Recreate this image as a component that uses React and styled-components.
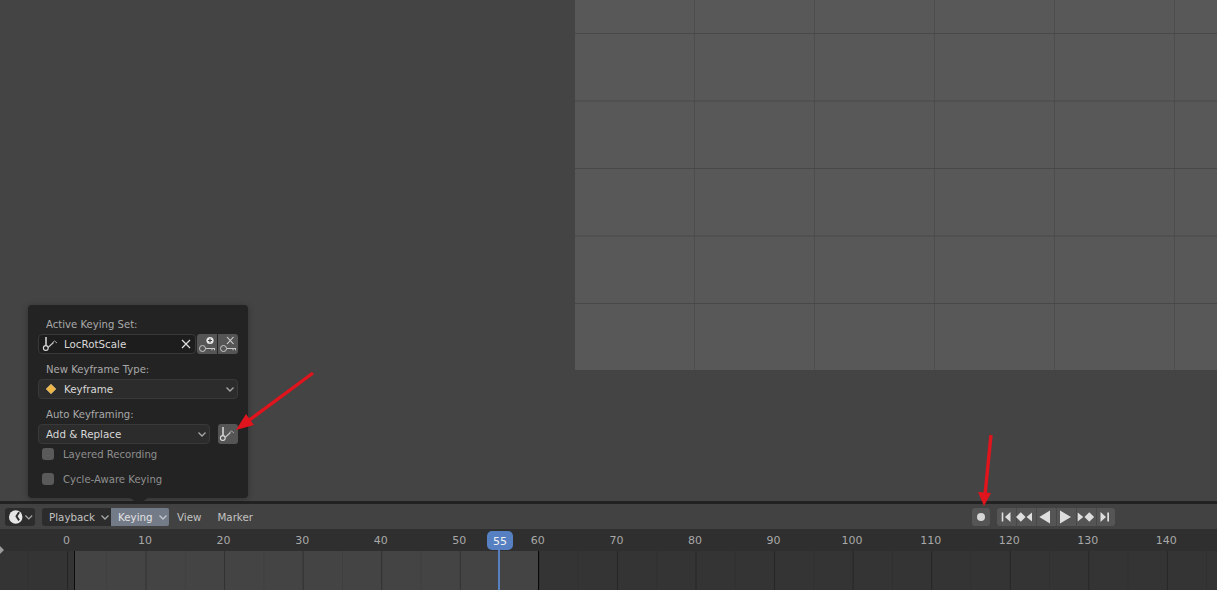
import React from "react";
import styled, { createGlobalStyle } from "styled-components";

const GlobalStyle = createGlobalStyle`
  html, body { margin: 0; padding: 0; background: #444444; overflow: hidden; }
  body { font-family: "DejaVu Sans", sans-serif; font-size: 10.3px; }
`;

const Screen = styled.div`
  position: relative;
  width: 1217px;
  height: 590px;
  display: flex;
  flex-direction: column;
  overflow: hidden;
`;

const Viewport = styled.div`
  height: 501px;
  background: #444444;
  display: flex;
  justify-content: flex-end;
  align-items: flex-start;
`;

// the lighter plane, lines every 120 x 67.5
const Plane = styled.div`
  width: 642px;
  height: 370px;
  background-color: #585858;
  background-image:
    linear-gradient(180deg, #484848 0 1px, transparent 1px),
    linear-gradient(90deg, #4d4d4d 0 1px, transparent 1px);
  background-size: 100% 67.5px, 120px 100%;
  background-position: 0 33px, 119px 0;
`;

const Divider = styled.div`
  height: 3px;
  background: #222222;
`;

const Header = styled.div`
  height: 25px;
  background: #424242;
  display: flex;
  align-items: center;
  padding-left: 5px;
  color: #c4c4c4;
`;

const DropButton = styled.div`
  height: 18px;
  box-sizing: border-box;
  width: ${(p) => p.$w}px;
  margin-left: ${(p) => p.$ml || 0}px;
  padding-left: ${(p) => p.$pl || 7}px;
  display: flex;
  align-items: center;
  justify-content: space-between;
  background: ${(p) => (p.$active ? "#737b88" : "#2c2c2c")};
  color: ${(p) => (p.$active ? "#e2e2e2" : "#c2c2c2")};
  border-radius: ${(p) => p.$radius || "3px"};
`;

const MenuText = styled.span`
  margin-left: ${(p) => p.$ml}px;
  color: #c2c2c2;
`;

const Transport = styled.div`
  margin-left: auto;
  margin-right: 102px;
  display: flex;
  align-items: center;
`;

const RoundButton = styled.div`
  width: 18px;
  height: 18px;
  background: #555555;
  border-radius: 3px;
  display: flex;
  align-items: center;
  justify-content: center;
`;

const ButtonGroup = styled.div`
  margin-left: 7px;
  display: flex;
  height: 18px;
  background: #555555;
  border-radius: 3px;
  overflow: hidden;
`;

const GroupButton = styled.div`
  width: ${(p) => p.$w}px;
  height: 18px;
  box-shadow: ${(p) => (p.$first ? "none" : "inset 1px 0 0 #484848")};
`;

const Ruler = styled.div`
  height: 22px;
  box-sizing: border-box;
  padding: 1px 0 0 27.2px;
  background: #2f2f2f;
  display: flex;
  align-items: center;
  color: #a8a8a8;
`;

const Tick = styled.div`
  flex: none;
  width: 78.57px;
  text-align: center;
  font-size: 11px;
`;

const Track = styled.div`
  flex: 1;
  background-image:
    linear-gradient(90deg, rgba(0, 0, 0, 0.22) 0 1px, transparent 1px),
    linear-gradient(90deg, rgba(0, 0, 0, 0.08) 0 1px, transparent 1px),
    linear-gradient(90deg, #343434 0 74px, #0c0c0c 74px 75px, #444444 75px 538px, #0c0c0c 538px 539px, #343434 539px);
  background-size: 78.57px 100%, 39.285px 100%, 100% 100%;
  background-position: 67px 0, 27.7px 0, 0 0;
  background-repeat: repeat-x, repeat-x, no-repeat;
`;

const FrameBadge = styled.div`
  position: absolute;
  left: 487px;
  top: 531px;
  width: 26px;
  height: 19px;
  box-sizing: border-box;
  padding-top: 1px;
  border-radius: 5px;
  background: #5680c2;
  color: #f0f0f0;
  font-size: 11px;
  display: flex;
  align-items: center;
  justify-content: center;
`;

const FrameLine = styled.div`
  position: absolute;
  left: 498px;
  top: 550px;
  width: 2px;
  height: 40px;
  background: #5680c2;
`;

const Popup = styled.div`
  position: absolute;
  left: 28px;
  top: 305px;
  width: 220px;
  height: 193px;
  box-sizing: border-box;
  padding: 11px 10px 0 10px;
  background: #232323;
  border-radius: 4px;
  box-shadow: 0 1px 6px rgba(0, 0, 0, 0.3);
  color: #a9a9a9;
  display: flex;
  flex-direction: column;
  &::after {
    content: "";
    position: absolute;
    left: 102px;
    bottom: -6px;
    border-left: 9px solid transparent;
    border-right: 9px solid transparent;
    border-top: 6px solid #232323;
  }
`;

const Label = styled.div`
  height: 18px;
  line-height: 17px;
  padding-left: 8px;
  font-size: 10.1px;
  color: #a9a9a9;
`;

const Row = styled.div`
  display: flex;
  height: 20px;
  margin-bottom: 7px;
`;

const Field = styled.div`
  flex: ${(p) => (p.$w ? "none" : 1)};
  width: ${(p) => (p.$w ? `${p.$w}px` : "auto")};
  box-sizing: border-box;
  background: ${(p) => (p.$select ? "#2c2c2c" : "#1d1d1d")};
  border: 1px solid #393939;
  border-radius: 4px;
  display: flex;
  align-items: center;
  color: #d8d8d8;
  padding-left: ${(p) => p.$pl || 7}px;
`;

const FieldIcon = styled.div`
  width: 18px;
  flex: none;
  display: flex;
  align-items: center;
  justify-content: center;
  margin-right: 4px;
`;

const FieldEnd = styled.div`
  margin-left: auto;
  margin-right: ${(p) => p.$mr || 3}px;
  display: flex;
  align-items: center;
`;

const IconButton = styled.div`
  width: 20px;
  height: 20px;
  flex: none;
  background: #555555;
  margin-left: ${(p) => p.$ml || 0}px;
  border-radius: ${(p) => p.$radius || "3px"};
  display: flex;
  align-items: center;
  justify-content: center;
`;

const CheckList = styled.div`
  margin-top: -10px;
`;

const CheckRow = styled.div`
  height: 25px;
  display: flex;
  align-items: center;
  padding-left: 4px;
  font-size: 10.1px;
  color: #8f8f8f;
`;

const CheckText = styled.span`
  padding-top: 1px;
`;

const CheckBox = styled.div`
  width: 12px;
  height: 12px;
  border-radius: 3px;
  background: #5a5a5a;
  margin-right: 9px;
`;

const ArrowLayer = styled.svg`
  position: absolute;
  left: 0;
  top: 0;
  pointer-events: none;
`;

const EdgeMark = styled.svg`
  position: absolute;
  left: 0;
  top: 546px;
`;

const Chevron = ({ color = "#a8a8a8" }) => (
  <svg width="12" height="12" viewBox="0 0 12 12">
    <path d="M2.5 4.5 6 8l3.5-3.5" fill="none" stroke={color} strokeWidth="1.3" />
  </svg>
);

const KeyingIcon = () => (
  <svg width="18" height="18" viewBox="0 0 18 18" fill="none" stroke="#dedede" strokeWidth="1.1">
    <path d="M4 2v8" strokeWidth="1.5" />
    <circle cx="3.8" cy="13" r="2.4" />
    <path d="M6 12.5 11.5 7.5" stroke="#c4c4c4" strokeWidth="1.2" />
    <path d="M10.5 7.5 12.5 6l2.5 2" strokeWidth="1" stroke="#a8a8a8" />
  </svg>
);

const KeyAddIcon = ({ mark }) => (
  <svg width="20" height="20" viewBox="0 0 20 20" fill="none" stroke="#c8c8c8" strokeWidth="1">
    <circle cx="5.5" cy="14.5" r="3" />
    <path d="M8.5 14.5H18M15 14.5v1.8M17.5 14.5v1.8" />
    {mark === "add" ? (
      <>
        <circle cx="13" cy="6.5" r="3.6" fill="#e8e8e8" stroke="none" />
        <path d="M11 6.5h4M13 4.5v4" stroke="#444" strokeWidth="1.2" />
      </>
    ) : (
      <path d="M9 3l6.5 7M15.5 3 9 10" strokeWidth="1.1" stroke="#dcdcdc" />
    )}
  </svg>
);

const DiamondIcon = () => (
  <svg width="12" height="12" viewBox="0 0 12 12">
    <path d="M6 1.2 10.8 6 6 10.8 1.2 6z" fill="#efb545" stroke="#f7dc9f" strokeWidth="0.6" />
  </svg>
);

const ClearIcon = () => (
  <svg width="12" height="12" viewBox="0 0 12 12">
    <path d="M2 2l8 8M10 2l-8 8" stroke="#e0e0e0" strokeWidth="1.2" />
  </svg>
);

const ClockIcon = () => (
  <svg width="16" height="16" viewBox="0 0 16 16">
    <circle cx="8" cy="8" r="7" fill="#e6e6e6" />
    <path d="M11.5 3 8.8 7.3 11.5 11.5" fill="none" stroke="#2c2c2c" strokeWidth="2" />
  </svg>
);

const Glyph = ({ d, w }) => (
  <svg width={w} height="18" viewBox={`0 0 ${w} 18`}>
    <path d={d} fill="#dedede" />
  </svg>
);

const transportIcons = [
  { w: 19, d: "M4.7 4.5h1.6v9H4.7zM13.5 4v10L8 9z" },
  { w: 20, d: "M4.8 4.2 9.6 9 4.8 13.8 0 9zM16 4.5v9L10.6 9z" },
  { w: 20, d: "M14 2.5v13L3.3 9z" },
  { w: 20, d: "M4 2.5v13L15 9z" },
  { w: 20, d: "M1.7 4.5v9L7.3 9zM13.3 4.2 18.1 9 13.3 13.8 8.5 9z" },
  { w: 19, d: "M4.5 4v10L10 9zM11.3 4.5H13v9h-1.7z" },
];

const frames = [0, 10, 20, 30, 40, 50, 60, 70, 80, 90, 100, 110, 120, 130, 140];

const App = () => {
  return (
    <Screen>
      <GlobalStyle />
      <Viewport>
        <Plane />
      </Viewport>
      <Divider />
      <Header>
        <DropButton $w={30} $pl={3}>
          <ClockIcon />
          <Chevron />
        </DropButton>
        <DropButton $w={69} $ml={7} $radius="3px 0 0 3px">
          Playback
          <Chevron />
        </DropButton>
        <DropButton $w={58} $active $radius="0 2px 2px 0">
          Keying
          <Chevron color="#c4c8ce" />
        </DropButton>
        <MenuText $ml={8}>View</MenuText>
        <MenuText $ml={16}>Marker</MenuText>
        <Transport>
          <RoundButton>
            <svg width="10" height="10" viewBox="0 0 10 10">
              <circle cx="5" cy="5" r="4" fill="#d6d6d6" />
            </svg>
          </RoundButton>
          <ButtonGroup>
            {transportIcons.map((icon, i) => (
              <GroupButton key={i} $w={icon.w} $first={i === 0}>
                <Glyph d={icon.d} w={icon.w} />
              </GroupButton>
            ))}
          </ButtonGroup>
        </Transport>
      </Header>
      <Ruler>
        {frames.map((f) => (
          <Tick key={f}>{f}</Tick>
        ))}
      </Ruler>
      <Track />
      <FrameLine />
      <FrameBadge>55</FrameBadge>
      <EdgeMark width="5" height="8" viewBox="0 0 5 8">
        <path d="M0 0l4 4-4 4z" fill="#9a9a9a" />
      </EdgeMark>

      <Popup>
        <Label>Active Keying Set:</Label>
        <Row>
          <Field $pl={3}>
            <FieldIcon>
              <KeyingIcon />
            </FieldIcon>
            LocRotScale
            <FieldEnd>
              <ClearIcon />
            </FieldEnd>
          </Field>
          <IconButton $ml={1} $radius="3px 0 0 3px">
            <KeyAddIcon mark="add" />
          </IconButton>
          <IconButton $ml={1} $radius="0 3px 3px 0">
            <KeyAddIcon mark="remove" />
          </IconButton>
        </Row>
        <Label>New Keyframe Type:</Label>
        <Row>
          <Field $pl={3} $w={200} $select>
            <FieldIcon>
              <DiamondIcon />
            </FieldIcon>
            Keyframe
            <FieldEnd $mr={1}>
              <Chevron />
            </FieldEnd>
          </Field>
        </Row>
        <Label>Auto Keyframing:</Label>
        <Row>
          <Field $w={172} $select>
            Add &amp; Replace
            <FieldEnd $mr={1}>
              <Chevron />
            </FieldEnd>
          </Field>
          <IconButton $ml={8}>
            <KeyingIcon />
          </IconButton>
        </Row>
        <CheckList>
          <CheckRow>
            <CheckBox />
            <CheckText>Layered Recording</CheckText>
          </CheckRow>
          <CheckRow>
            <CheckBox />
            <CheckText>Cycle-Aware Keying</CheckText>
          </CheckRow>
        </CheckList>
      </Popup>

      <ArrowLayer width="1217" height="590">
        <path d="M313 373 248 421" stroke="#e0141c" strokeWidth="3.4" fill="none" />
        <path d="M236 430 246 414 254 425z" fill="#e0141c" />
        <path d="M991 435 985 495" stroke="#e0141c" strokeWidth="3.4" fill="none" />
        <path d="M984 506 978 492 991 493z" fill="#e0141c" />
      </ArrowLayer>
    </Screen>
  );
};

export default App;
